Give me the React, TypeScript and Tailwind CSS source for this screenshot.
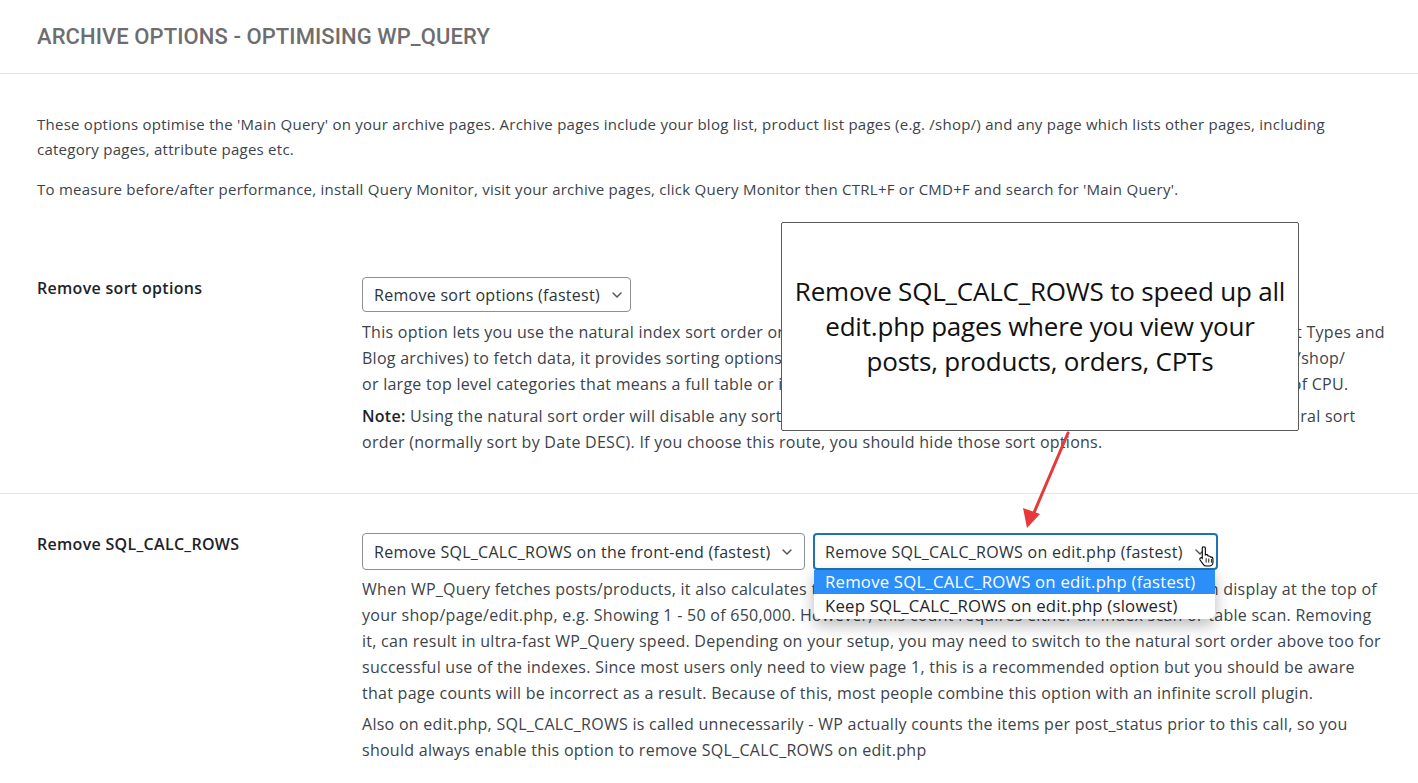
import { ChevronDown } from 'lucide-react';

const body = "font-['Open_Sans',sans-serif]";

function Select({ label, width, focused }: { label: string; width: string; focused?: boolean }) {
  return (
    <div
      className={`${width} h-[37px] flex items-center gap-[9px] rounded-[4px] bg-white text-[16px] tracking-[0.28px] text-[#2c3338] ${
        focused ? 'border-2 border-[#2271b1] pl-[10px]' : 'border border-[#8c8f94] pl-[11px]'
      }`}
    >
      <span className="whitespace-nowrap">{label}</span>
      <ChevronDown className="w-[16px] h-[16px] text-[#50575e] shrink-0" strokeWidth={2.2} />
    </div>
  );
}

function Lines({ lines }: { lines: React.ReactNode[] }) {
  return (
    <p className="text-[16px] leading-[26px] tracking-[0.27px]">
      {lines.map((l, i) => (
        <span key={i} className="block whitespace-nowrap">
          {l}
        </span>
      ))}
    </p>
  );
}

export default function App() {
  return (
    <div className={`relative min-h-screen overflow-hidden bg-white text-[#3c434a] ${body}`}>
      {/* Page title */}
      <header className="h-[74px] flex items-center px-[37px] border-b border-[#e5e5e5]">
        <h1 className="font-['Roboto',sans-serif] font-medium text-[22px] tracking-[0.08px] text-[#6e6e6e]">
          ARCHIVE OPTIONS - OPTIMISING WP_QUERY
        </h1>
      </header>

      {/* Intro */}
      <div className="px-[37px] pt-[38px] text-[15px] leading-[25px] tracking-[0.25px] flex flex-col gap-[15px]">
        <p>
          <span className="block whitespace-nowrap">
            These options optimise the 'Main Query' on your archive pages. Archive pages include your blog list, product list pages (e.g. /shop/) and any page which lists other pages, including
          </span>
          <span className="block">category pages, attribute pages etc.</span>
        </p>
        <p className="whitespace-nowrap">
          To measure before/after performance, install Query Monitor, visit your archive pages, click Query Monitor then CTRL+F or CMD+F and search for 'Main Query'.
        </p>
      </div>

      {/* Remove sort options */}
      <div className="grid grid-cols-[325px_1fr] px-[37px] pt-[75px] pb-[38px] border-b border-[#e5e5e5]">
        <div className="text-[16px] leading-[22px] tracking-[0.3px] font-semibold text-[#1d2327]">Remove sort options</div>
        <div>
          <Select label="Remove sort options (fastest)" width="w-[269px] !h-[35px]" />
          <div className="mt-[7px] flex flex-col gap-[6px]">
            <Lines
              lines={[
                'This option lets you use the natural index sort order on your archive pages. In WooCommerce, and some archives (eg Post Types and',
                'Blog archives) to fetch data, it provides sorting options which require filesort and temporary table on each page load. On /shop/',
                'or large top level categories that means a full table or index scan of thousands of rows for every page load, using up lots of CPU.',
              ]}
            />
            <Lines
              lines={[
                <>
                  <strong className="font-semibold text-[#1d2327]">Note:</strong> Using the natural sort order will disable any sorting dropdowns on your archive pages, and so they will use the natural sort
                </>,
                'order (normally sort by Date DESC). If you choose this route, you should hide those sort options.',
              ]}
            />
          </div>
        </div>
      </div>

      {/* Remove SQL_CALC_ROWS */}
      <div className="grid grid-cols-[325px_1fr] px-[37px] pt-[39px] pb-[30px]">
        <div className="text-[16px] leading-[22px] tracking-[0.3px] font-semibold text-[#1d2327]">Remove SQL_CALC_ROWS</div>
        <div>
          <div className="flex gap-[8px]">
            <Select label="Remove SQL_CALC_ROWS on the front-end (fastest)" width="w-[443px]" />
            <div className="relative">
              <Select label="Remove SQL_CALC_ROWS on edit.php (fastest)" width="w-[405px]" focused />
              {/* open dropdown */}
              <div className="absolute left-[1px] top-[37px] w-[401px] bg-white rounded-b-[6px] shadow-[0_6px_16px_rgba(0,0,0,0.28)] overflow-hidden text-[16.75px] leading-[24px] tracking-[0.2px] text-[#1d2327] z-10">
                <div className="px-[11px] bg-[#2c8ef8] text-white whitespace-nowrap">Remove SQL_CALC_ROWS on edit.php (fastest)</div>
                <div className="px-[11px] pb-[1px] whitespace-nowrap">Keep SQL_CALC_ROWS on edit.php (slowest)</div>
              </div>
              {/* pointer cursor */}
              <svg className="absolute left-[385px] top-[12px] z-20" width="18" height="22" viewBox="0 0 16 20">
                <path
                  d="M5 1.5c.8 0 1.5.7 1.5 1.5v6l.6-.2c.8-.2 1.6.2 1.8.9l.2.4.5-.1c.8-.1 1.5.4 1.7 1.1l.6-.1c.8 0 1.5.6 1.5 1.4v3.2c0 1.8-1.3 3.5-3.3 3.5H7.3c-1 0-1.9-.5-2.5-1.3L1.7 13.6c-.4-.6-.3-1.4.3-1.8.6-.4 1.3-.3 1.7.2V3c0-.8.7-1.5 1.5-1.5z"
                  fill="white"
                  stroke="black"
                  strokeWidth="1"
                />
                <path d="M7.2 12v4M9.6 12.3v3.7M12 12.6v3.4" stroke="black" strokeWidth="0.8" />
              </svg>
            </div>
          </div>
          <div className="mt-[6px] flex flex-col gap-[5px]">
            <Lines
              lines={[
                'When WP_Query fetches posts/products, it also calculates the total number of posts/products which it can then display at the top of',
                'your shop/page/edit.php, e.g. Showing 1 - 50 of 650,000. However, this count requires either an index scan or table scan. Removing',
                'it, can result in ultra-fast WP_Query speed. Depending on your setup, you may need to switch to the natural sort order above too for',
                'successful use of the indexes. Since most users only need to view page 1, this is a recommended option but you should be aware',
                'that page counts will be incorrect as a result. Because of this, most people combine this option with an infinite scroll plugin.',
              ]}
            />
            <Lines
              lines={[
                'Also on edit.php, SQL_CALC_ROWS is called unnecessarily - WP actually counts the items per post_status prior to this call, so you',
                'should always enable this option to remove SQL_CALC_ROWS on edit.php',
              ]}
            />
          </div>
        </div>
      </div>

      {/* Callout annotation */}
      <div className="absolute left-[781px] top-[222px] w-[518px] h-[209px] flex items-center justify-center bg-white border border-[#5a5a5a] rounded-[2px] text-center text-[26px] leading-[35px] tracking-[-0.2px] text-[#111]">
        <p>
          Remove SQL_CALC_ROWS to speed up all
          <br />
          edit.php pages where you view your
          <br />
          posts, products, orders, CPTs
        </p>
      </div>

      {/* Red arrow */}
      <svg className="absolute left-0 top-0 pointer-events-none" width="1418" height="783">
        <line x1="1068" y1="433" x2="1033" y2="515" stroke="#e8393a" strokeWidth="3" strokeLinecap="round" />
        <polygon points="1027,528 1023,508 1040,514" fill="#e8393a" />
      </svg>
    </div>
  );
}
